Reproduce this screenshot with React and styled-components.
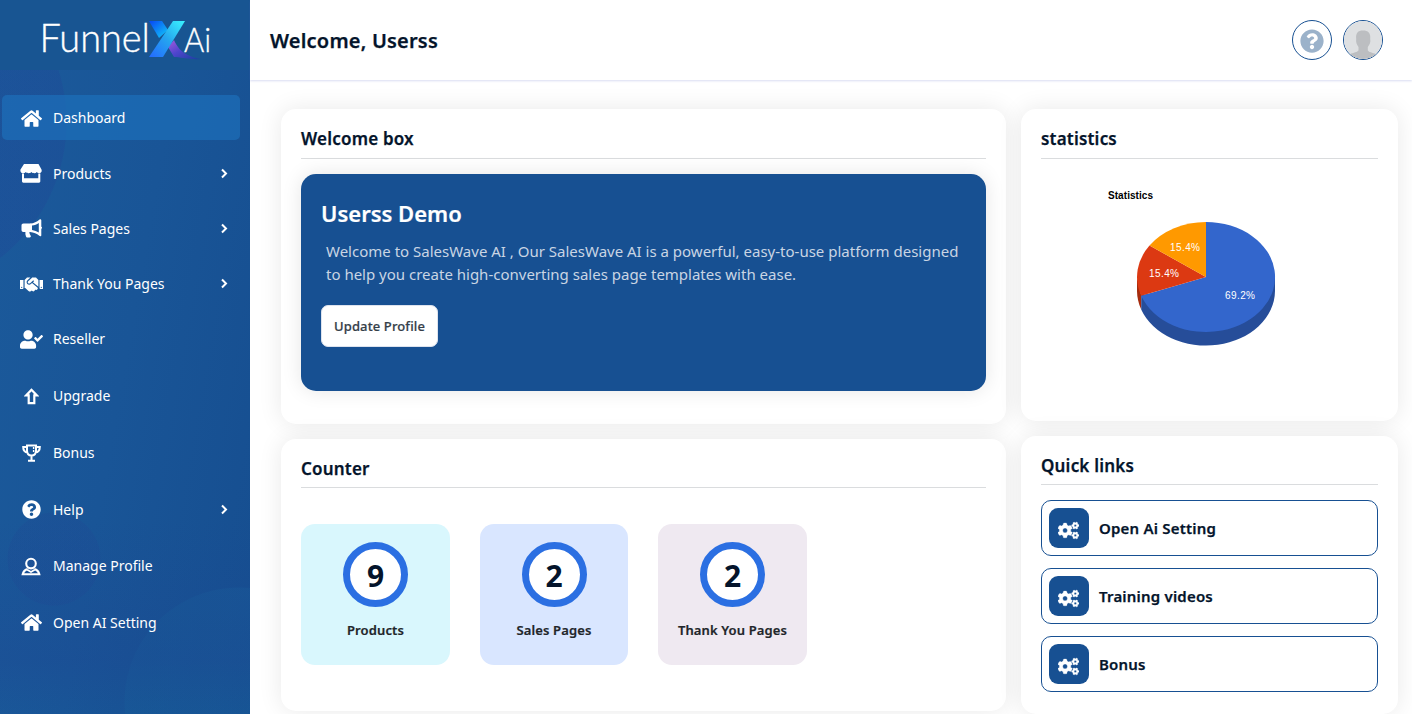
import React from 'react';
import styled, { createGlobalStyle, css } from 'styled-components';
import { FaHome, FaHandshake, FaUserCheck, FaQuestionCircle, FaCogs } from 'react-icons/fa';

const Global = createGlobalStyle`
  * { box-sizing: border-box; }
  body { margin: 0; background: #fff; font-family: "Noto Sans", sans-serif; color: #04142b; overflow: hidden; }
  h1, h2, h3, p { margin: 0; }
`;

const heading = css`
  font-weight: 600;
  letter-spacing: .2px;
  -webkit-text-stroke: .25px currentColor;
`;

const Shell = styled.div`
  display: grid;
  grid-template-columns: 250px 1fr;
  height: 714px;
  overflow: hidden;
`;

const Sidebar = styled.aside`
  height: 714px;
  overflow: hidden;
  background:
    linear-gradient(to bottom, transparent 520px, rgba(30, 66, 145, .25) 660px, transparent 714px),
    radial-gradient(circle at 54px 559px, rgba(32, 68, 146, .22) 0 46px, transparent 47px),
    radial-gradient(circle at 239px 702px, rgba(24, 90, 152, .55) 0 114px, transparent 115px),
    radial-gradient(circle at -106px 122px, rgba(32, 66, 150, .28) 0 172px, transparent 173px),
    linear-gradient(100deg, #1b5a9b 0%, #195597 50%, #164e90 100%);
`;

const Brand = styled.div`
  height: 70px;
  background: #185592;
  svg { display: block; }
`;

const Nav = styled.nav`
  padding: 25px 10px 0 2px;
`;

const NavItem = styled.a`
  display: grid;
  grid-template-columns: 29px 1fr 14px;
  column-gap: 7px;
  align-items: center;
  height: 45px;
  margin-bottom: ${(p) => p.$gap}px;
  padding: 0 9px 0 15px;
  border-radius: 5px;
  background: ${(p) => (p.$active ? 'rgba(29, 115, 190, .62)' : 'transparent')};
  color: #fff;
  font-size: 14px;
  line-height: 21px;
  white-space: nowrap;
`;

const NavIcon = styled.span`
  display: flex;
  justify-content: center;
  padding: ${(p) => p.$drop || 0}px 1px 0 0;
  font-size: ${(p) => p.$size || 21}px;
`;

const Main = styled.main`
  min-width: 0;
`;

const Header = styled.header`
  display: flex;
  align-items: center;
  gap: 11px;
  height: 80px;
  padding: 0 29px 0 20px;
  box-shadow: 0 1px 2px rgba(90, 110, 200, .24);
`;

const Greeting = styled.h1`
  flex: 1;
  ${heading}
  font-size: 20px;
  line-height: 28px;
  padding-top: 2px;
`;

const Round = styled.div`
  display: flex;
  align-items: center;
  justify-content: center;
  width: 40px;
  height: 40px;
  padding-top: ${(p) => p.$drop || 0}px;
  border: 1px solid #175092;
  border-radius: 50%;
  overflow: hidden;
  color: #9bb2ca;
  font-size: 24px;
`;

const Content = styled.div`
  display: grid;
  grid-template-columns: 725px 377px;
  column-gap: 15px;
  padding: 29px 0 0 31px;
`;

const Column = styled.div`
  display: flex;
  flex-direction: column;
  gap: 15px;
`;

const Card = styled.section`
  height: ${(p) => p.$height}px;
  padding: 0 20px;
  border-radius: 15px;
  background: #fff;
  box-shadow: 0 0 25px rgba(0, 0, 0, .09);
`;

const CardTitle = styled.h2`
  height: ${(p) => p.$height || 50}px;
  padding-top: 17px;
  border-bottom: 1px solid #dadcde;
  ${heading}
  font-size: 17px;
  line-height: 26px;
`;

const Banner = styled.div`
  height: 217px;
  margin-top: 15px;
  padding: 23px 20px;
  border-radius: 15px;
  background: #175092;
  box-shadow: 0 0 20px rgba(0, 0, 0, .1);
`;

const BannerTitle = styled.h3`
  color: #fff;
  font-size: 22px;
  font-weight: 600;
  line-height: 32px;
  -webkit-text-stroke: .2px currentColor;
`;

const BannerText = styled.p`
  padding: 11px 5px 0;
  color: #c9d5e4;
  font-size: 15px;
  line-height: 23px;
  white-space: nowrap;
`;

const ProfileButton = styled.button`
  display: block;
  width: 117px;
  height: 42px;
  margin-top: 19px;
  padding: 0;
  border: 1px solid #dde3ee;
  border-radius: 7px;
  background: #fff;
  color: #343e49;
  font: 500 13px "Noto Sans", sans-serif;
  letter-spacing: .13px;
  -webkit-text-stroke: .2px currentColor;
`;

const Counters = styled.div`
  display: grid;
  grid-template-columns: 149px 148px 149px;
  gap: 30px;
  margin-top: 36px;
`;

const Counter = styled.div`
  display: flex;
  flex-direction: column;
  align-items: center;
  height: 141px;
  padding-top: 18px;
  border-radius: 14px;
  background: ${(p) => p.$color};
  color: #212529;
  font-size: 13px;
  font-weight: 600;
  letter-spacing: .13px;
  line-height: 20px;
  -webkit-text-stroke: .2px currentColor;
`;

const Ring = styled.div`
  width: 65px;
  height: 65px;
  margin-bottom: 13px;
  border: 7px solid #2b6fe2;
  border-radius: 50%;
  background: #fff;
  color: #04142b;
  font-size: 30px;
  font-weight: 700;
  letter-spacing: 0;
  line-height: 54px;
  text-align: center;
  -webkit-text-stroke: 0;
`;

const Chart = styled.svg`
  display: block;
  width: 337px;
  height: 200px;
  font-family: "Liberation Sans", sans-serif;
  font-size: 10px;
`;

const Links = styled.div`
  display: grid;
  gap: 12px;
  margin-top: 15px;
`;

const QuickLink = styled.a`
  display: flex;
  align-items: center;
  gap: 10px;
  height: 56px;
  padding-left: 7px;
  border: 1px solid #175092;
  border-radius: 10px;
  ${heading}
  font-size: 15px;
`;

const LinkIcon = styled.span`
  display: flex;
  align-items: center;
  justify-content: center;
  width: 40px;
  height: 40px;
  padding: 5px 1px 0 0;
  border-radius: 9px;
  background: #175092;
  color: #fff;
  font-size: 21px;
  path { stroke: #fff; stroke-width: 10; }
`;

const Logo = () => (
  <svg width="250" height="70" viewBox="0 0 250 70" fill="#fff">
    <defs>
      <linearGradient id="stroke" x1="0" y1="1" x2="1" y2="0">
        <stop offset="0" stopColor="#2469ff" /><stop offset=".5" stopColor="#25a5ef" /><stop offset="1" stopColor="#3af4ff" />
      </linearGradient>
      <linearGradient id="arm" x1="0" y1="0" x2="1" y2="1">
        <stop offset="0" stopColor="#0746f5" /><stop offset="1" stopColor="#13cdf8" />
      </linearGradient>
      <linearGradient id="tail" x1="0" y1="0" x2="1" y2="1">
        <stop offset="0" stopColor="#a55ade" /><stop offset=".45" stopColor="#4f45cd" /><stop offset="1" stopColor="#173f9d" />
      </linearGradient>
    </defs>
    <g fontFamily="Lato, sans-serif" fontWeight="300" stroke="#fff" strokeWidth=".35">
      <text x="39.5" y="52" fontSize="38.5" textLength="110.5" lengthAdjust="spacingAndGlyphs">Funnel</text>
      <text x="184" y="52" fontSize="33" textLength="27" lengthAdjust="spacingAndGlyphs">Ai</text>
    </g>
    <path d="M149 21H162L168 30L159 38Z" fill="url(#arm)" />
    <path d="M168 47L174 40C178 49 184 56 201 59C190 60 180 57 174 57Z" fill="url(#tail)" />
    <path d="M173 21H185L163 57H149Z" fill="url(#stroke)" />
  </svg>
);

const Storefront = () => (
  <svg width="22" height="19" viewBox="0 0 22 19" fill="#fff">
    <path d="M4 0H18.5L21.5 5.5C22.3 8 20.8 9.2 19.2 9.2C18 9.2 17.2 8.6 16.8 8C16.2 8.8 15.4 9.2 14.3 9.2C13.2 9.2 12 8.8 11.4 8C10.8 8.8 9.8 9.2 8.6 9.2C7.4 9.2 6.4 8.8 5.8 8C5.2 8.8 4.2 9.2 3 9.2C1 9.2 0 7.8 .5 5.5Z" />
    <path d="M2 9.6H4V14.2H18.3V9.6H20.3V17.3C20.3 18.2 19.8 18.7 19 18.7H3.4C2.5 18.7 2 18.2 2 17.3Z" />
  </svg>
);

const Horn = () => (
  <svg width="21" height="19" viewBox="0 0 21 19" fill="#fff">
    <path d="M2.5 4.5H9.5V13H8.4C8.4 14.8 9.2 15.6 9.8 17C10 17.8 9.5 18.4 8.8 18.4H6.2C5.5 18.4 5.2 18.1 5 17.5C4.4 16 4.2 14.5 4.4 13H2.5C1.2 13 .5 12.2 .5 11V6.5C.5 5.2 1.2 4.5 2.5 4.5Z" />
    <path fillRule="evenodd" d="M9 4.5C13 4.3 15.7 2.8 18.3 .7C19.3 -.1 20.3 .3 20.3 1.2V16.2C20.3 17.2 19.3 17.6 18.3 16.8C15.7 14.7 13 13.2 9 13ZM11 6.6V10.9C13.6 11.3 15.8 12.2 17.8 13.5V4C15.8 5.3 13.6 6.3 11 6.6Z" />
    <circle cx="20" cy="8.7" r="1" />
  </svg>
);

const UpArrow = () => (
  <svg width="15" height="17" viewBox="0 0 15 17" fill="none" stroke="#fff" strokeWidth="2.2">
    <path d="M7.5 1.8L2.2 7.4H4.7V15.2H10.3V7.4H12.8Z" />
  </svg>
);

const Trophy = () => (
  <svg width="19" height="18" viewBox="0 0 19 18" fill="none" stroke="#fff" strokeWidth="2">
    <path d="M5 1.4H14V6.5C14 10 12.3 11.6 9.5 11.6S5 10 5 6.5ZM5 3H1.2C1.2 6.5 2.8 8.2 5.8 8.6M14 3H17.8C17.8 6.5 16.2 8.2 13.2 8.6M9.5 12V16M6 16.7H13" />
    <path d="M11.6 3V8" strokeWidth="1.4" strokeDasharray="2 1" />
  </svg>
);

const Profile = () => (
  <svg width="20" height="19" viewBox="0 0 20 19" fill="none" stroke="#fff" strokeWidth="2.1">
    <circle cx="10" cy="6.6" r="4.8" />
    <path d="M6.7 12.1C3.5 12.8 2.3 14.6 1.7 17.2H18.3C17.7 14.6 16.5 12.8 13.3 12.1" />
    <path d="M6.3 12.8L10 15L13.7 12.8" strokeWidth="1.7" />
  </svg>
);

const Chevron = () => (
  <svg width="14" height="12" viewBox="0 0 14 12" fill="none" stroke="#fff" strokeWidth="2">
    <path d="M5 1.5L9 5.5L5 9.5" />
  </svg>
);

const Person = () => (
  <svg width="38" height="38" viewBox="0 0 38 38">
    <rect width="38" height="38" fill="#dee0e2" />
    <path d="M19 9.5C14 9.5 11.5 12 12.2 18C11.6 21 13 24 14.5 26V29.5C12.5 32 7.5 31.5 5 34V38H33V34C30.5 31.5 25.5 32 23.8 29.5V26C25.4 24 27 21 26.2 18C27 12 24 9.5 19 9.5Z" fill="#bcbec1" />
  </svg>
);

const navItems = [
  { label: 'Dashboard', icon: <FaHome />, gap: 11, active: true, drop: 1 },
  { label: 'Products', icon: <Storefront />, gap: 10, more: true },
  { label: 'Sales Pages', icon: <Horn />, gap: 10, more: true },
  { label: 'Thank You Pages', icon: <FaHandshake />, gap: 10, more: true, size: 23, drop: 1 },
  { label: 'Reseller', icon: <FaUserCheck />, gap: 12, size: 23, drop: 1 },
  { label: 'Upgrade', icon: <UpArrow />, gap: 12, drop: 1 },
  { label: 'Bonus', icon: <Trophy />, gap: 12, drop: 1 },
  { label: 'Help', icon: <FaQuestionCircle />, gap: 11, more: true, size: 19 },
  { label: 'Manage Profile', icon: <Profile />, gap: 12, drop: 2 },
  { label: 'Open AI Setting', icon: <FaHome />, gap: 0 },
];

const counters = [
  { label: 'Products', value: 9, color: '#d9f7fd' },
  { label: 'Sales Pages', value: 2, color: '#d9e6ff' },
  { label: 'Thank You Pages', value: 2, color: '#efe9f1' },
];

const quickLinks = ['Open Ai Setting', 'Training videos', 'Bonus'];

export default function App() {
  return (
    <Shell>
      <Global />
      <Sidebar>
        <Brand><Logo /></Brand>
        <Nav>
          {navItems.map((item) => (
            <NavItem key={item.label} $gap={item.gap} $active={item.active}>
              <NavIcon $size={item.size} $drop={item.drop}>{item.icon}</NavIcon>
              <span>{item.label}</span>
              {item.more && <Chevron />}
            </NavItem>
          ))}
        </Nav>
      </Sidebar>
      <Main>
        <Header>
          <Greeting>Welcome, Userss</Greeting>
          <Round $drop={2}><FaQuestionCircle /></Round>
          <Round><Person /></Round>
        </Header>
        <Content>
          <Column>
            <Card $height={315}>
              <CardTitle>Welcome box</CardTitle>
              <Banner>
                <BannerTitle>Userss Demo</BannerTitle>
                <BannerText>
                  Welcome to SalesWave AI , Our SalesWave AI is a powerful, easy-to-use platform designed<br />
                  to help you create high-converting sales page templates with ease.
                </BannerText>
                <ProfileButton>Update Profile</ProfileButton>
              </Banner>
            </Card>
            <Card $height={272}>
              <CardTitle $height={49}>Counter</CardTitle>
              <Counters>
                {counters.map((c) => (
                  <Counter key={c.label} $color={c.color}>
                    <Ring>{c.value}</Ring>
                    {c.label}
                  </Counter>
                ))}
              </Counters>
            </Card>
          </Column>
          <Column>
            <Card $height={312}>
              <CardTitle>statistics</CardTitle>
              <Chart viewBox="0 0 337 200">
                <text x="67" y="40" fontWeight="700" textLength="45">Statistics</text>
                <path d="M96 118V132A69 55 0 0 0 100.2 150.5V136Z" fill="#a52b0d" />
                <path d="M100.2 136V150.5A69 55 0 0 0 234 132V118Z" fill="#264d99" />
                <path d="M165 118V63A69 55 0 1 1 100.2 136.8Z" fill="#3366cc" />
                <path d="M165 118L100.2 136.8A69 55 0 0 1 108.5 86.5Z" fill="#dc3912" />
                <path d="M165 118L108.5 86.5A69 55 0 0 1 165 63Z" fill="#ff9900" />
                <g fill="#fff">
                  <text x="129" y="92" textLength="30">15.4%</text>
                  <text x="108" y="118" textLength="30">15.4%</text>
                  <text x="184" y="140" textLength="30">69.2%</text>
                </g>
              </Chart>
            </Card>
            <Card $height={278}>
              <CardTitle $height={49}>Quick links</CardTitle>
              <Links>
                {quickLinks.map((label) => (
                  <QuickLink key={label}>
                    <LinkIcon><FaCogs /></LinkIcon>
                    {label}
                  </QuickLink>
                ))}
              </Links>
            </Card>
          </Column>
        </Content>
      </Main>
    </Shell>
  );
}
